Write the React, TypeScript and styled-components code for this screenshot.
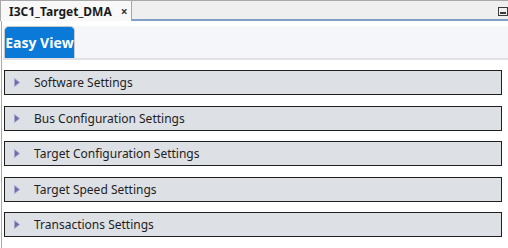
import React from "react";
import styled, { createGlobalStyle } from "styled-components";

const Global = createGlobalStyle`
  html, body { margin: 0; padding: 0; background: #ffffff; }
  body { width: 508px; height: 248px; overflow: hidden; font-family: "Noto Sans", "Open Sans", sans-serif; }
`;

const Frame = styled.div`
  width: 508px;
  height: 248px;
  display: flex;
  flex-direction: column;
  background: #ffffff;
`;

const TabBar = styled.div`
  height: 21px;
  display: flex;
  align-items: stretch;
  background: #efefef;
  border-top: 1px solid #a8a8a8;
  box-sizing: border-box;
`;

const EditorTab = styled.div`
  width: 132px;
  display: flex;
  align-items: center;
  padding-left: 8px;
  gap: 9px;
  background: #f8f8f8;
  border-left: 1px solid #a8a8a8;
  border-right: 1px solid #a8a8a8;
  box-sizing: border-box;
  font-weight: 700;
  font-size: 12px;
  color: #1a1a1a;
`;

const Close = styled.span`
  font-size: 12px;
  font-weight: 700;
  color: #333;
`;

const BarRest = styled.div`
  flex: 1;
  display: flex;
  justify-content: flex-end;
  align-items: center;
  border-bottom: 2px solid #7f9fc6;
  padding-top: 3px;
`;

const MinBtn = styled.div`
  width: 8px;
  height: 7px;
  border: 1px solid #3a3a3a;
  display: flex;
  align-items: flex-end;
  justify-content: center;
  &::after {
    content: "";
    width: 6px;
    height: 2px;
    background: #3a3a3a;
    margin-bottom: 1px;
  }
`;

const Content = styled.div`
  flex: 1;
  border-left: 1px solid #a8a8a8;
  margin-left: 1px;
  padding: 5px 6px 0 1px;
  display: flex;
  flex-direction: column;
`;

const ViewStrip = styled.div`
  height: 34px;
  display: flex;
  align-items: flex-end;
  background: #f5f6f9;
  border-bottom: 2px solid #e2e2e4;
  box-sizing: border-box;
  margin-right: -6px;
`;

const ViewTab = styled.div`
  width: 71px;
  height: 32px;
  box-sizing: border-box;
  margin-left: 1px;
  display: flex;
  align-items: center;
  justify-content: center;
  background: #0a79d8;
  border: 1px solid #c9c9c9;
  border-bottom: none;
  border-radius: 5px 5px 0 0;
  color: #ffffff;
  font-weight: 700;
  font-size: 14px;
  font-family: "Open Sans", "Noto Sans", sans-serif;
`;

const Sections = styled.div`
  display: flex;
  flex-direction: column;
  gap: 10.5px;
  margin-top: 10px;
  padding-left: 1px;
`;

const Section = styled.div`
  height: 25px;
  box-sizing: border-box;
  border: 1px solid #1f1f1f;
  background: #dde0e5;
  display: flex;
  align-items: center;
  padding-left: 8px;
  gap: 13px;
  font-size: 12px;
  color: #1e1e1e;
`;

const Arrow = styled.svg`
  width: 8px;
  height: 11px;
  flex: none;
`;

const labels = [
  "Software Settings",
  "Bus Configuration Settings",
  "Target Configuration Settings",
  "Target Speed Settings",
  "Transactions Settings",
];

export default function App() {
  return (
    <>
      <Global />
      <Frame>
        <TabBar>
          <EditorTab>
            <span>I3C1_Target_DMA</span>
            <Close>×</Close>
          </EditorTab>
          <BarRest>
            <MinBtn />
          </BarRest>
        </TabBar>
        <Content>
          <ViewStrip>
            <ViewTab>Easy View</ViewTab>
          </ViewStrip>
          <Sections>
            {labels.map((l) => (
              <Section key={l}>
                <Arrow viewBox="0 0 8 11">
                  <path d="M1.5 1.5 L6.5 5.5 L1.5 9.5 Z" fill="#6a6ca6" stroke="#a4a6cc" strokeWidth="1" strokeLinejoin="round" />
                </Arrow>
                <span>{l}</span>
              </Section>
            ))}
          </Sections>
        </Content>
      </Frame>
    </>
  );
}
